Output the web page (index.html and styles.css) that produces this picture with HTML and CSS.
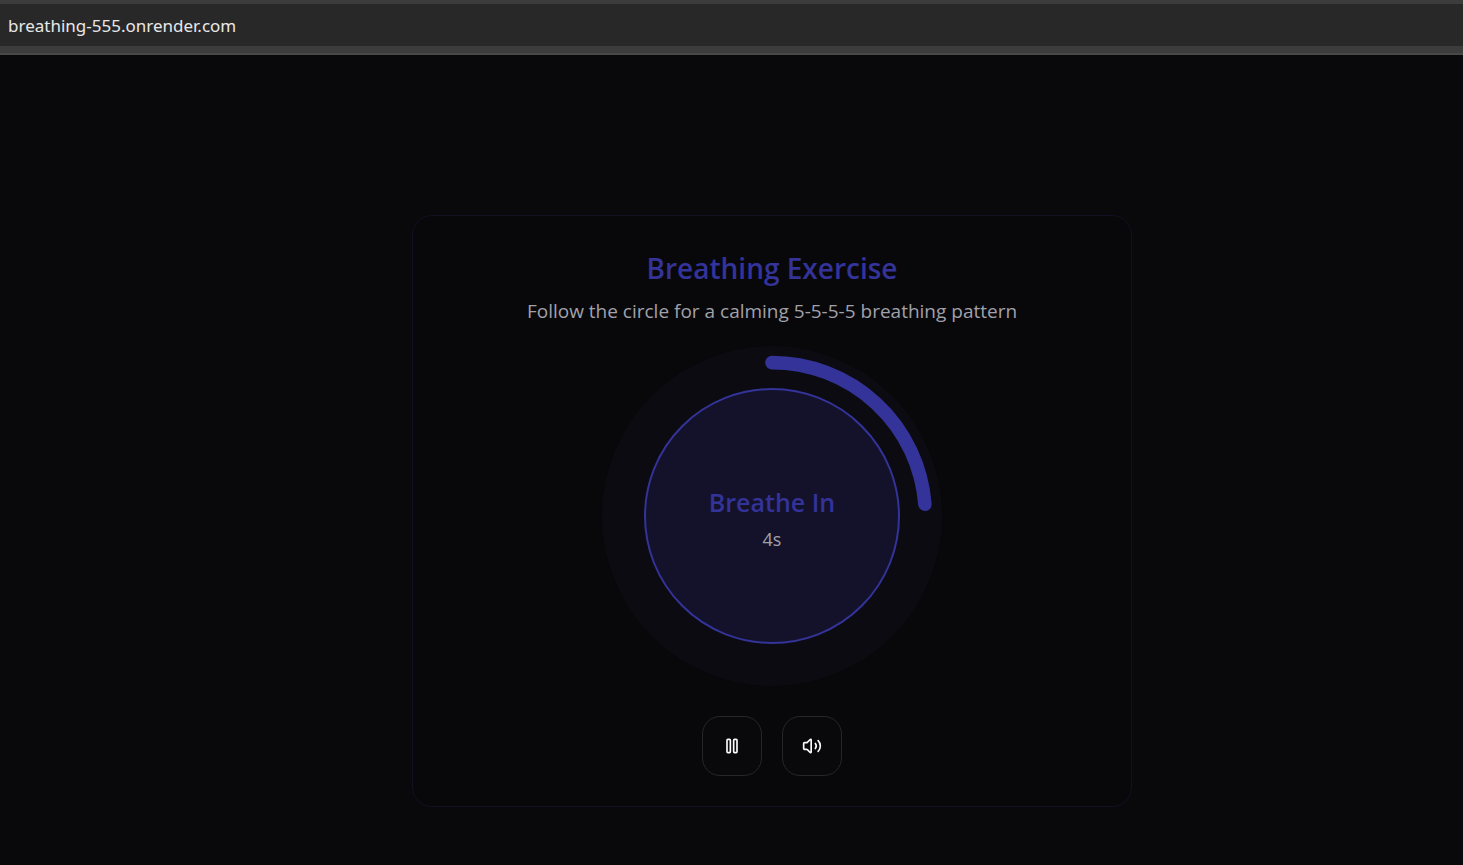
FILE: index.html
```html
<!DOCTYPE html>
<html lang="en">
<head>
<meta charset="utf-8">
<meta name="viewport" content="width=device-width, initial-scale=1">
<title>Breathing Exercise</title>
<link rel="stylesheet" href="styles.css">
</head>
<body>
<header class="browser-bar">
  <input class="address" type="text" aria-label="Address" value="breathing-555.onrender.com">
</header>
<main class="page">
  <section class="card">
    <h1 class="title">Breathing Exercise</h1>
    <p class="description">Follow the circle for a calming 5-5-5-5 breathing pattern</p>
    <div class="dial">
      <svg class="progress" viewBox="0 0 100 100" aria-hidden="true">
        <circle class="progress-arc" cx="50" cy="50" r="45.1" pathLength="1000" stroke-dasharray="238 1000" transform="rotate(-90 50 50)"/>
      </svg>
      <div class="orb">
        <h2 class="phase">Breathe In</h2>
        <p class="seconds">4s</p>
      </div>
    </div>
    <div class="controls">
      <button class="control" type="button" aria-label="Pause">
        <svg class="icon" viewBox="0 0 24 24" aria-hidden="true"><rect x="14" y="4" width="4" height="16" rx="1"/><rect x="6" y="4" width="4" height="16" rx="1"/></svg>
      </button>
      <button class="control" type="button" aria-label="Mute">
        <svg class="icon" viewBox="0 0 24 24" aria-hidden="true"><path d="M11 4.702a.705.705 0 0 0-1.203-.498L6.413 7.587A1.4 1.4 0 0 1 5.416 8H3a1 1 0 0 0-1 1v6a1 1 0 0 0 1 1h2.416a1.4 1.4 0 0 1 .997.413l3.383 3.384A.705.705 0 0 0 11 19.298z"/><path d="M16 9a5 5 0 0 1 0 6"/><path d="M19.364 18.364a9 9 0 0 0 0-12.728"/></svg>
      </button>
    </div>
  </section>
</main>
</body>
</html>
```

FILE: styles.css
```css
* {
  box-sizing: border-box;
}

body {
  margin: 0;
  min-height: 100vh;
  background: #09090b;
  color: #fafafa;
  font-family: "Segoe UI", "Open Sans", "Noto Sans", sans-serif;
}

h1, h2, p {
  margin: 0;
}

.browser-bar {
  height: 55px;
  padding: 4px 0 7px;
  background: #3c3c3c;
  border-bottom: 2px solid #484848;
}

.address {
  display: block;
  width: 100%;
  height: 42px;
  padding: 0 8px;
  border: 0;
  outline: 0;
  background: #282828;
  color: #e8e8e8;
  font-family: "Segoe UI", "Noto Sans", sans-serif;
  font-size: 17px;
}

.page {
  display: flex;
  justify-content: center;
  padding: 160px 0 58px 81px;
}

.card {
  display: flex;
  flex-direction: column;
  align-items: center;
  width: 100%;
  max-width: 720px;
  padding: 30px;
  border: 1px solid #121024;
  border-radius: 20px;
  background: #08080a;
}

.title {
  margin-bottom: 6px;
  color: #333399;
  font-size: 28px;
  font-weight: 600;
  line-height: 44px;
}

.description {
  margin-bottom: 20px;
  color: #a1a1aa;
  font-size: 19px;
  line-height: 30px;
}

.dial {
  display: grid;
  place-items: center;
  width: 340px;
  height: 340px;
  margin-bottom: 30px;
  border-radius: 50%;
  background: #0c0b11;
}

.progress,
.orb {
  grid-area: 1 / 1;
}

.progress {
  width: 100%;
  height: 100%;
}

.progress-arc {
  fill: none;
  stroke: #333399;
  stroke-width: 4;
  stroke-linecap: round;
}

.orb {
  display: flex;
  flex-direction: column;
  align-items: center;
  justify-content: center;
  gap: 4px;
  width: 256px;
  height: 256px;
  padding-top: 6px;
  border: 2px solid #333399;
  border-radius: 50%;
  background: #14122b;
}

.phase {
  color: #333399;
  font-size: 25px;
  font-weight: 600;
  line-height: 36px;
}

.seconds {
  color: #a1a1aa;
  font-size: 18px;
  line-height: 30px;
}

.controls {
  display: flex;
  gap: 20px;
}

.control {
  display: grid;
  place-items: center;
  width: 60px;
  height: 60px;
  padding: 0;
  border: 1px solid #27272a;
  border-radius: 18px;
  background: #09090b;
  color: #fafafa;
}

.icon {
  width: 20px;
  height: 20px;
  fill: none;
  stroke: currentColor;
  stroke-width: 2;
  stroke-linecap: round;
  stroke-linejoin: round;
}
```
